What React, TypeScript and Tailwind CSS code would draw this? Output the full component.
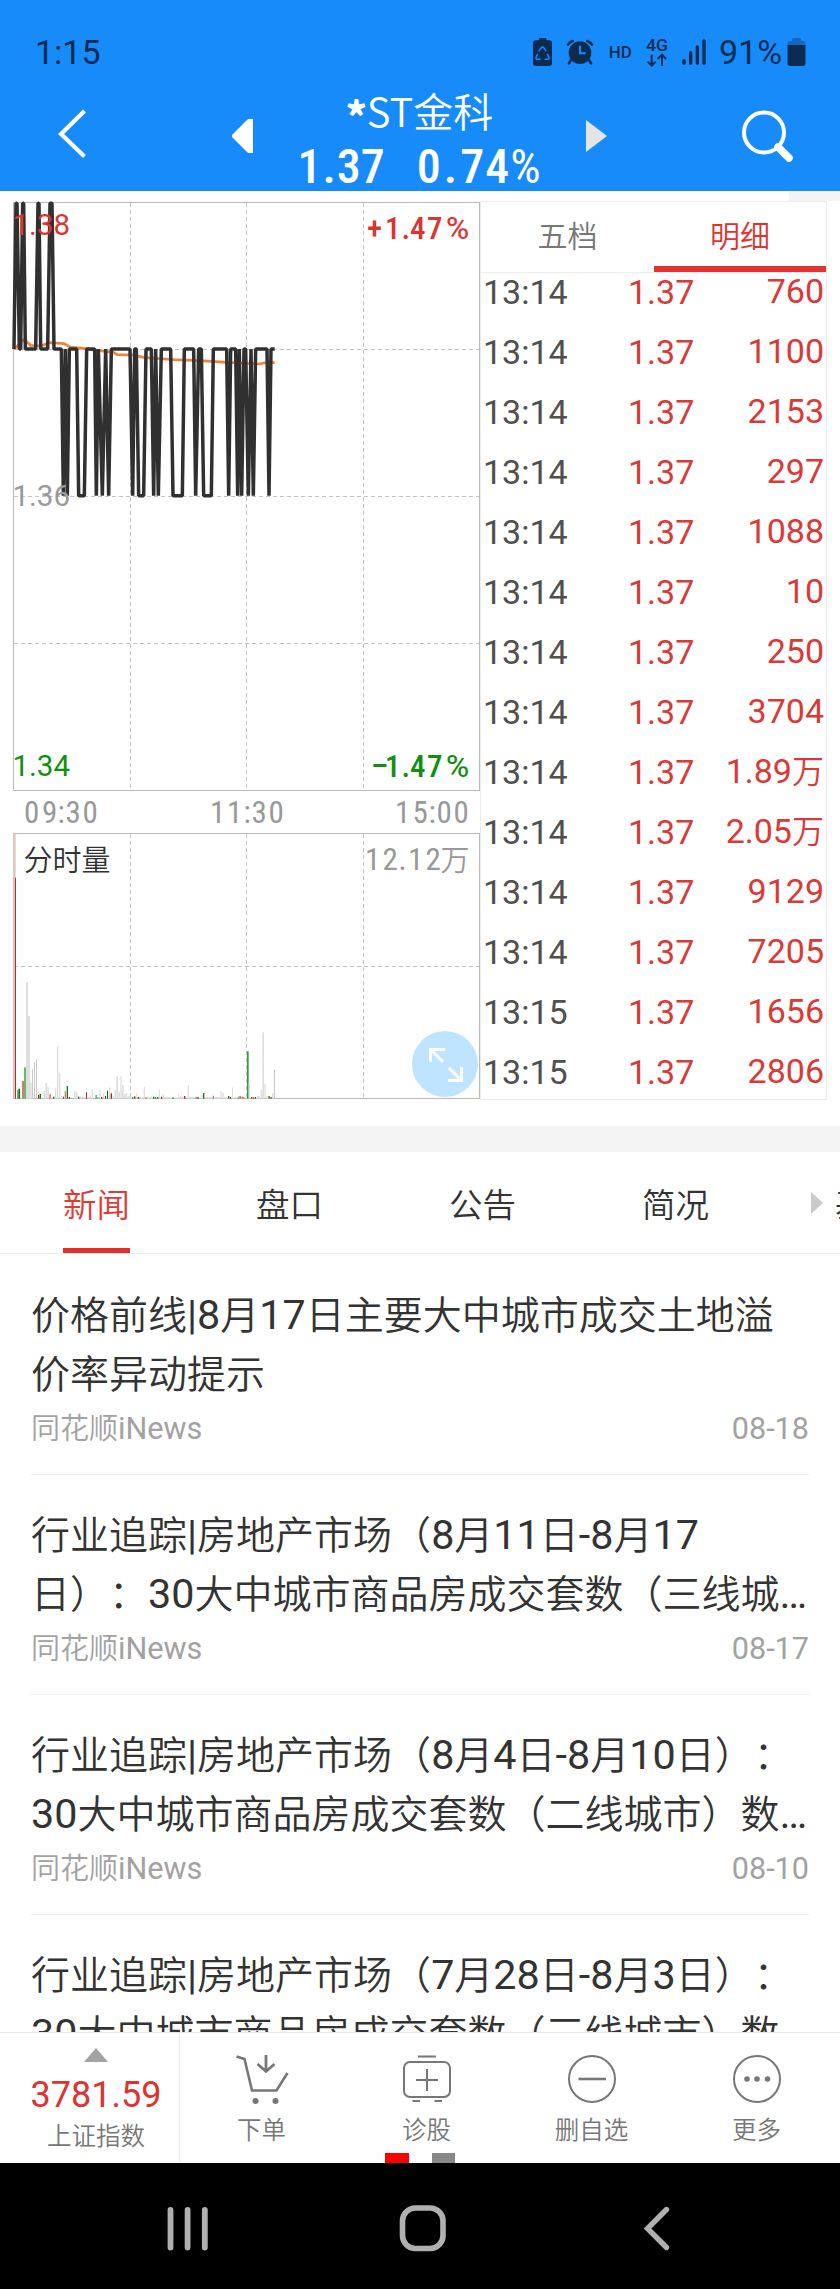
import type { ReactNode } from "react";

const SANS = "font-[Roboto,'Noto_Sans_CJK_SC',sans-serif]";
const CJK = "font-['Noto_Sans_CJK_SC',sans-serif] font-[350]";
const COND = "font-['Roboto_Condensed',Roboto,sans-serif] font-medium";

type Trade = [time: string, price: string, volume: string];

const trades: Trade[] = [
  ["13:14", "1.37", "760"],
  ["13:14", "1.37", "1100"],
  ["13:14", "1.37", "2153"],
  ["13:14", "1.37", "297"],
  ["13:14", "1.37", "1088"],
  ["13:14", "1.37", "10"],
  ["13:14", "1.37", "250"],
  ["13:14", "1.37", "3704"],
  ["13:14", "1.37", "1.89万"],
  ["13:14", "1.37", "2.05万"],
  ["13:14", "1.37", "9129"],
  ["13:14", "1.37", "7205"],
  ["13:15", "1.37", "1656"],
  ["13:15", "1.37", "2806"],
];

const news = [
  { lines: ["价格前线|8月17日主要大中城市成交土地溢", "价率异动提示"], date: "08-18" },
  { lines: ["行业追踪|房地产市场（8月11日-8月17", "日）：30大中城市商品房成交套数（三线城…"], date: "08-17" },
  { lines: ["行业追踪|房地产市场（8月4日-8月10日）：", "30大中城市商品房成交套数（二线城市）数…"], date: "08-10" },
  { lines: ["行业追踪|房地产市场（7月28日-8月3日）：", "30大中城市商品房成交套数（三线城市）数…"], date: "08-03" },
];

const priceLine =
  "M42 477L48 40L51 40L58 477L62 477L68 40L71 40L76 477L107 477L114 40L117 40L122 477L143 477L150 40L156 40L162 477L184 477" +
  "L190 917L196 477L202 917L208 477L230 477L236 917L253 917L260 477L278 477L284 477L289 917L295 477L307 917L317 477L326 917L334 477" +
  "L390 477L398 917L404 477L409 477L416 917L431 917L438 477L454 477L461 917L467 477L475 917L484 477L512 477L519 917L547 917L553 477" +
  "L581 477L587 917L596 477L604 477L611 917L634 917L640 477L680 477L686 917L692 477L707 477L713 917L718 477L725 917L732 477L737 477" +
  "L745 917L753 477L760 917L767 477L801 477L807 917L813 477L824 477";

const averageLine =
  "M43 478L50 470L58 462L70 450L80 455L92 466L122 468L150 458L192 461L210 471L250 475L290 481L340 487L352 494L400 495L430 502L520 509L600 512L680 517L740 520L780 522L800 517L824 518";

const GRAY = "#dedede";
const RED = "#e57373";
const DEEP_RED = "#b71c1c";
const GREEN = "#66bb6a";
const DEEP_GREEN = "#0b7a10";

type Bar = [x: number, top: number, width: number, color: string];

const bars: Bar[] = [
  [40, 280, 7, "#e9c4c4"], [45, 413, 3, "#c62828"],
  [51, 1050, 4, GREEN], [55, 1046, 5, DEEP_GREEN], [66, 1023, 6, RED], [72, 982, 6, GREEN],
  [78, 726, 6, GRAY], [84, 828, 6, GRAY], [90, 1028, 5, GRAY], [96, 987, 3, "#c8c8c8"], [102, 966, 3, "#c8c8c8"], [108, 958, 3, "#c8c8c8"],
  [114, 1065, 4, DEEP_RED], [119, 1062, 4, DEEP_GREEN], [130, 1053, 5, GRAY], [136, 1030, 5, GRAY], [142, 1042, 5, GRAY], [148, 1063, 5, RED],
  [159, 1070, 4, DEEP_GREEN], [165, 1045, 4, GRAY], [171, 920, 4, GRAY], [177, 1000, 4, GRAY], [183, 1068, 4, GRAY], [189, 1070, 3, DEEP_GREEN],
  [194, 1054, 4, RED], [200, 1038, 4, DEEP_GREEN], [206, 1071, 4, DEEP_RED], [222, 1053, 5, GRAY], [228, 1057, 5, GRAY], [234, 1070, 4, DEEP_GREEN],
  [240, 1070, 16, GRAY], [258, 1057, 3, DEEP_RED], [264, 1071, 4, GRAY], [269, 1067, 4, GRAY], [275, 1049, 4, GRAY], [286, 1065, 5, GREEN],
  [292, 1071, 4, GREEN], [298, 1049, 4, GRAY], [303, 1071, 4, DEEP_GREEN], [309, 1060, 4, GRAY], [315, 1068, 3, DEEP_RED], [321, 1052, 3, DEEP_GREEN],
  [327, 1042, 3, GRAY], [332, 1060, 4, DEEP_RED], [338, 1067, 5, GRAY], [344, 1050, 4, GRAY], [349, 1009, 5, GRAY], [355, 1056, 5, GRAY],
  [361, 1009, 4, GRAY], [366, 1034, 5, GRAY], [372, 1062, 5, GRAY], [378, 1059, 4, GRAY], [384, 1068, 10, GRAY], [396, 1072, 4, DEEP_GREEN],
  [402, 1069, 4, DEEP_RED], [408, 1060, 3, GRAY], [413, 1071, 5, DEEP_GREEN], [419, 1071, 10, GRAY], [431, 1041, 4, GRAY], [436, 1071, 4, RED],
  [442, 1071, 10, GRAY], [453, 1069, 4, GRAY], [459, 1070, 4, DEEP_GREEN], [465, 1071, 3, DEEP_GREEN], [471, 1071, 4, DEEP_GREEN], [477, 1049, 3, GRAY],
  [483, 1070, 4, DEEP_RED], [488, 1062, 4, GRAY], [494, 1071, 20, GRAY], [517, 1072, 4, DEEP_GREEN], [524, 1072, 10, GRAY], [534, 1061, 4, GRAY],
  [540, 1068, 5, GRAY], [546, 1070, 5, GRAY], [552, 1068, 4, DEEP_RED], [563, 1035, 4, GRAY], [569, 1071, 12, GRAY], [586, 1071, 5, GREEN],
  [592, 1071, 4, DEEP_RED], [603, 1065, 4, GRAY], [609, 1059, 4, DEEP_GREEN], [615, 1071, 20, GRAY], [638, 1067, 4, RED], [644, 1071, 14, GRAY],
  [661, 1053, 4, GRAY], [667, 1058, 4, GRAY], [673, 1071, 8, GRAY], [684, 1068, 4, DEEP_GREEN], [690, 1071, 3, DEEP_RED], [696, 1042, 3, GRAY],
  [702, 1071, 8, GRAY], [713, 1070, 5, GREEN], [718, 1068, 5, RED], [724, 1070, 5, GREEN], [729, 1071, 4, RED],
  [741, 934, 5, "#2e9e3a"], [746, 1029, 4, GRAY], [753, 1071, 4, DEEP_RED], [759, 1072, 4, DEEP_GREEN], [765, 1071, 3, DEEP_RED], [770, 1068, 10, GRAY],
  [782, 1049, 4, GRAY], [787, 877, 5, GRAY], [793, 1031, 4, GRAY], [799, 1069, 5, GRAY], [805, 1068, 5, "#43a047"], [811, 1071, 4, DEEP_RED],
  [816, 1059, 4, GRAY], [822, 990, 3, "#c8c8c8"],
];

/** Sets Latin runs slightly larger than the Chinese text around them. */
function Mixed({ text, latin }: { text: string; latin: string }) {
  return (
    <>
      {text.split(/([\w|.…-]+)/).map((run, i) =>
        i % 2 === 1 ? <span key={i} className={`font-normal leading-none ${latin}`}>{run}</span> : run,
      )}
    </>
  );
}

function StatusBar() {
  return (
    <div className="flex h-20 items-start text-[#0b2b50]">
      <span className="ml-[35px] mt-8 w-[495px] text-[34px] leading-[40px]">1:15</span>
      <svg className="mt-[35px] h-[33px] w-[180px] shrink-0" viewBox="330 105 540 99" fill="currentColor">
        <rect x="357" y="114" width="22" height="12" rx="3" />
        <rect x="339" y="121" width="57" height="77" rx="8" />
        <g fill="none" stroke="#188bfb" strokeWidth="4.500" strokeLinejoin="round">
          <path d="M356 154L364 143Q367.500 139 371 143L379 154" />
          <path d="M353 162L348 173Q347 178 353 178L362 178" />
          <path d="M382 162L387 173Q388 178 382 178L374 178" />
        </g>
        <path d="M367.500 149L355 168H380Z" />
        <circle cx="480" cy="158" r="34" />
        <path d="M452 181l-5 9M508 181l5 9M444 134q5-8 14-11M516 134q-5-8-14-11" stroke="currentColor" strokeWidth="8" strokeLinecap="round" fill="none" />
        <path d="M480 137V160H497" stroke="#188bfb" strokeWidth="6" fill="none" />
        <text x="566" y="174" fontSize="52" fontWeight="500" textLength="69" lengthAdjust="spacingAndGlyphs">HD</text>
        <text x="678" y="153" fontSize="50" fontWeight="500" textLength="66" lengthAdjust="spacingAndGlyphs">4G</text>
        <path d="M695 164V196M683 185L695 197L707 185M726 198V166M713 177L726 164L738 177" stroke="currentColor" strokeWidth="6" fill="none" />
        <path d="M792 182V190M812 158V190M832 141V190M852 123V190" stroke="currentColor" strokeWidth="10" strokeLinecap="round" />
      </svg>
      <span className="ml-[9px] mt-8 w-[66px] text-[34px] leading-[40px]">91%</span>
      <svg className="ml-[2px] mt-[38px] h-7 w-[19px]" viewBox="0 0 19 28">
        <path d="M5 1.500Q5 0 6.500 0H12.500Q14 0 14 1.500V3H16Q18.500 3 18.500 5.500V8H0.500V5.500Q0.500 3 3 3H5Z" fill="#1268bf" />
        <path d="M0.500 7H18.500V25Q18.500 28 16 28H3Q0.500 28 0.500 25Z" fill="currentColor" />
      </svg>
    </div>
  );
}

function TitleBar() {
  return (
    <div className="flex h-[111px] items-start text-white">
      <svg className="ml-[57px] mt-[29px] h-[50px] w-[30px]" viewBox="0 0 30 50" fill="none" stroke="currentColor" strokeWidth="4.200">
        <path d="M27.500 2L4 25L27.500 47.500" />
      </svg>
      <svg className="ml-[145px] mt-[39px] h-[34px] w-[21px]" viewBox="0 0 21 34" fill="currentColor">
        <path d="M21 0V34H16L0 18V16L16 0Z" />
      </svg>
      <div className="flex w-[333px] flex-col items-center pt-2">
        <div className={`${CJK} h-[44px] text-[40px] leading-[44px]`}>
          <span className="align-[-5px] font-black leading-none">*</span>ST金科
        </div>
        <div className={`${COND} mt-[11px] flex gap-[32px] text-[48px] leading-[48px]`}>
          <span>1<span className="mx-[1px]">.</span>37</span>
          <span className="tracking-[1px]">0<span className="mx-[2px]">.</span>74<span className="font-normal">%</span></span>
        </div>
      </div>
      <svg className="mt-10 h-8 w-[21px]" viewBox="0 0 21 32" fill="#e4e4e4">
        <path d="M0 0L21 16L0 32Z" />
      </svg>
      <svg className="ml-[134px] mt-[29px] h-[54px] w-[54px]" viewBox="0 0 54 54" fill="none" stroke="currentColor">
        <circle cx="23" cy="23.500" r="20" strokeWidth="4" />
        <path d="M37 38L48 49" strokeWidth="7.500" strokeLinecap="round" />
      </svg>
    </div>
  );
}

function Charts() {
  const grid = { stroke: "#c4c4c4", strokeWidth: 1, strokeDasharray: "4 3" };
  return (
    <svg className="h-[911px] w-[480px] shrink-0" viewBox="0 191 480 911">
      <g {...grid}>
        {[130.5, 246.5, 363.5].map((x) => (
          <g key={x}>
            <path d={`M${x} 203V790`} />
            <path d={`M${x} 834V1098`} />
          </g>
        ))}
        {[349.5, 496.5, 643.5, 966.5].map((y) => (
          <path key={y} d={`M14 ${y}H479`} />
        ))}
      </g>
      <rect x="13.500" y="202.500" width="466" height="588" fill="none" stroke="#b9b9b9" />
      <rect x="13.500" y="833.500" width="466" height="265" fill="none" stroke="#b9b9b9" />
      <g transform="translate(0 190) scale(0.33333)" fill="none">
        <path d={averageLine} stroke="#ea8440" strokeWidth="8" />
        <path d={priceLine} stroke="#303030" strokeWidth="10.500" strokeLinejoin="bevel" />
      </g>
      <g transform="translate(0 740) scale(0.33333)">
        {bars.map(([x, top, width, color]) => (
          <rect key={x} x={x} y={top} width={width} height={1076 - top} fill={color} />
        ))}
      </g>
      <g fontSize="29.500">
        <text x="12.500" y="234.500" fill="#d93732">1.38</text>
        <text x="12.500" y="506" fill="#999">1.36</text>
        <text x="12.500" y="776" fill="#109010">1.34</text>
      </g>
      <g className={COND} fontSize="31">
        <text x="367 385 401.500 410 427" y="239" fill="#dc3431">+1.47</text>
        <text x="371 385 401.500 410 427" y="777" fill="#109010">–1.47</text>
        <g className="font-normal">
          <text x="445.500" y="239" fill="#dc3431" textLength="24" lengthAdjust="spacingAndGlyphs">%</text>
          <text x="445.500" y="777" fill="#109010" textLength="24" lengthAdjust="spacingAndGlyphs">%</text>
        </g>
        <g fill="#999" className="font-[450]">
          <text x="24 42 57.500 65.500 82.500" y="822.500">09:30</text>
          <text x="210 227 243.500 251.500 268.500" y="822.500">11:30</text>
          <text x="395 412.500 428.500 436.500 453.500" y="822.500">15:00</text>
          <text x="365 382.500 398.500 408 425.500" y="870">12.12</text>
        </g>
      </g>
      <text x="440.500" y="870.500" fontSize="29" fill="#999" className={CJK}>万</text>
      <text x="23.500" y="870.500" fontSize="29" fill="#333" className={CJK}>分时量</text>
      <circle cx="445" cy="1064" r="33" fill="#bfe4ff" />
      <path d="M443 1062L431 1050M430.500 1062V1049.500H445M449 1068L461 1080M461.500 1067V1080.500H448" fill="none" stroke="#fff" strokeWidth="3" />
    </svg>
  );
}

function TradePanel() {
  return (
    <div className="mt-[10px] flex h-[899px] w-[347px] flex-col overflow-hidden border border-[#ececec]">
      <div className={`${CJK} flex h-[71px] shrink-0 border-b border-[#ececec] text-[30px] leading-[64px]`}>
        <div className="w-[173px] text-center text-[#777]">五档</div>
        <div className="w-[172px] border-b-6 border-[#e5322d] text-center text-[#dc3431]">明细</div>
      </div>
      <div className="-mt-[11px]">
        {trades.map(([time, price, volume], i) => (
          <div key={i} className="flex h-[60px] pl-[2px] pr-[2px] text-[34px] leading-[60px] text-[#d93a37]">
            <span className="w-[145px] text-[#505050]">{time}</span>
            <span>{price}</span>
            <span className="ml-auto text-[32px] font-[350]">
              <Mixed text={volume} latin="text-[34px]" />
            </span>
          </div>
        ))}
      </div>
    </div>
  );
}

function NewsTabs() {
  return (
    <nav className="relative flex h-[102px] shrink-0 overflow-hidden border-b border-[#ececec]">
      {["新闻", "盘口", "公告", "简况", "基本"].map((label, i) => (
        <div key={label} className={`${CJK} flex w-[193px] shrink-0 justify-center text-[33.5px] leading-[101px] ${i === 0 ? "text-[#e03a35]" : "text-[#333]"}`}>
          <span className={i === 0 ? "h-[101px] border-b-5 border-[#e0302c]" : "h-[101px]"}>{label}</span>
        </div>
      ))}
      <svg className="absolute left-[811px] top-[40px] h-[22px] w-[12px]" viewBox="0 0 12 22" fill="#cacaca">
        <path d="M0 0L12 11L0 22Z" />
      </svg>
    </nav>
  );
}

function NewsList() {
  return (
    <div className="h-[778px] shrink-0 overflow-hidden px-[31px] pt-px font-[350]">
      {news.map((item) => (
        <article key={item.date} className="h-[220px] border-b border-[#ececec] pt-8">
          {item.lines.map((line) => (
            <p key={line} className="h-[59px] whitespace-nowrap text-[39px] leading-[59px] text-[#333] [text-spacing-trim:space-all]">
              <Mixed text={line} latin="text-[41.3px]" />
            </p>
          ))}
          <div className="mt-[2px] flex h-[44px] justify-between text-[29px] leading-[44px] text-[#a2a2a2]">
            <span><Mixed text="同花顺iNews" latin="text-[30.6px]" /></span>
            <span><Mixed text={item.date} latin="text-[30.6px]" /></span>
          </div>
        </article>
      ))}
    </div>
  );
}

function Action({ label, children }: { label: string; children: ReactNode }) {
  return (
    <div className="flex flex-1 flex-col items-center pt-[20px]">
      <svg className="h-[54px] w-[54px]" viewBox="0 0 54 54" fill="none" stroke="#777" strokeWidth="2">
        {children}
      </svg>
      <span className={`${CJK} mt-[6px] text-[24.5px] leading-[32px] text-[#777]`}>{label}</span>
    </div>
  );
}

function BottomBar() {
  return (
    <div className="relative flex h-[131px] shrink-0 border-t border-[#e8e8e8]">
      <div className="flex w-[180px] shrink-0 flex-col items-center border-r border-[#ececec] pl-[13px]">
        <svg className="mt-[15px] h-[14px] w-[24px]" viewBox="0 0 24 14" fill="#a3a3a3">
          <path d="M12 0L24 14H0Z" />
        </svg>
        <span className="mt-[11px] text-[36px] leading-[44px] text-[#dc3431]">3781.59</span>
        <span className={`${CJK} mt-[2px] text-[24.5px] leading-[32px] text-[#777]`}>上证指数</span>
      </div>
      <div className="-ml-px mr-px flex flex-1">
        <Action label="下单">
          <path d="M1.500 3.500L9.500 6L17 37.500H41.500L52.500 20" strokeWidth="2.600" />
          <path d="M31 2V17M22.500 11L31 18.500L39.500 11" strokeWidth="2.800" />
          <circle cx="20.500" cy="48" r="3" fill="#777" stroke="none" />
          <circle cx="40.500" cy="48" r="3" fill="#777" stroke="none" />
        </Action>
        <Action label="诊股">
          <rect x="4" y="9" width="46" height="35" rx="6" />
          <path d="M18 3.500H36M12.500 48H20M34.500 48H42M16 27H38M27 16V38" />
        </Action>
        <Action label="删自选">
          <circle cx="27" cy="26" r="23" />
          <path d="M13.500 26H41" strokeWidth="2.600" />
        </Action>
        <Action label="更多">
          <circle cx="27" cy="26" r="23" />
          <g fill="#777" stroke="none">
            <circle cx="17" cy="26" r="2.800" />
            <circle cx="27" cy="26" r="2.800" />
            <circle cx="37.500" cy="26" r="2.800" />
          </g>
        </Action>
      </div>
      <div className="absolute bottom-0 left-[385px] flex gap-[23px]">
        <i className="h-[10px] w-[23.5px] bg-[#ff0000]" />
        <i className="h-[10px] w-[23.5px] bg-[#888]" />
      </div>
    </div>
  );
}

function SystemNav() {
  return (
    <div className="flex flex-1 items-start bg-black pt-[41px]">
      <svg className="ml-[167px] h-[48px] w-[42px]" viewBox="0 0 42 48" stroke="#b0b0b0" strokeWidth="5.800" strokeLinecap="round">
        <path d="M3.500 6V43.500M20.600 6V43.500M37.800 6V43.500" />
      </svg>
      <svg className="ml-[190px] h-[48px] w-[48px]" viewBox="0 0 48 48" fill="none" stroke="#b0b0b0" strokeWidth="5.600">
        <rect x="3.500" y="4" width="40.500" height="40.500" rx="13" />
      </svg>
      <svg className="ml-[196px] h-[48px] w-[28px]" viewBox="0 0 28 48" fill="none" stroke="#b0b0b0" strokeWidth="5.400" strokeLinecap="round">
        <path d="M23.500 5.500L4.500 24.500L23.500 43.500" />
      </svg>
    </div>
  );
}

export default function App() {
  return (
    <div className={`${SANS} flex h-[2289px] w-[840px] flex-col overflow-hidden bg-white`}>
      <header className="h-[191px] shrink-0 bg-[#188bfb]">
        <StatusBar />
        <TitleBar />
      </header>
      <section className="relative flex h-[935px] shrink-0">
        <Charts />
        <TradePanel />
        <div className="absolute right-0 top-0 h-[10px] w-[51px] bg-[#f4f4f4]" />
      </section>
      <div className="h-[26px] shrink-0 bg-[#f4f4f4]" />
      <NewsTabs />
      <NewsList />
      <BottomBar />
      <SystemNav />
    </div>
  );
}
